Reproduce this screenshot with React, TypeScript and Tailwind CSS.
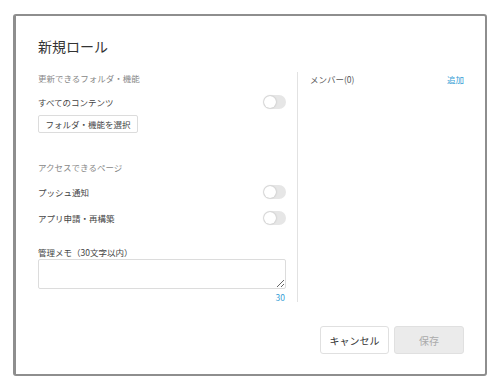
import React from "react";

const font = { fontFamily: '"Noto Sans CJK JP", "Noto Sans", sans-serif' };

function Toggle() {
  return (
    <div className="relative h-[14px] w-[23px] rounded-full bg-[#e6e6e6]">
      <div className="absolute left-[1px] top-[1px] h-[12px] w-[12px] rounded-full bg-white shadow-[0_0_2px_rgba(0,0,0,0.25)]" />
    </div>
  );
}

export default function App() {
  return (
    <div className="min-h-[390px] w-[497px] bg-white" style={font}>
      <div className="ml-[13px] pt-[14px]">
        <div className="flex h-[362px] w-[474px] flex-col rounded-[3px] border-b-2 border-l-[3px] border-r-2 border-t-2 border-[#8e8e8e] bg-white pl-[22px] pr-[21px]">
          <div className="mt-[20px] h-[20px] text-[14px] leading-[20px] text-[#333]">新規ロール</div>
          <div className="mt-[16px] flex">
            <div className="flex w-[248px] flex-col">
              <div className="flex h-[12px] items-center text-[8.5px] text-[#888]">更新できるフォルダ・機能</div>
              <div className="mt-[11px] flex h-[14px] items-center justify-between text-[8.5px] text-[#444]">
                <span>すべてのコンテンツ</span>
                <Toggle />
              </div>
              <div className="mt-[6px] flex">
                <button className="flex h-[18px] w-[100px] items-center justify-center rounded-[2px] border border-[#dcdcdc] bg-white text-[8.5px] text-[#444]">
                  フォルダ・機能を選択
                </button>
              </div>
              <div className="mt-[28px] flex h-[12px] items-center text-[8.5px] text-[#888]">アクセスできるページ</div>
              <div className="mt-[12px] flex h-[14px] items-center justify-between text-[8.5px] text-[#444]">
                <span>プッシュ通知</span>
                <Toggle />
              </div>
              <div className="mt-[12px] flex h-[14px] items-center justify-between text-[8.5px] text-[#444]">
                <span>アプリ申請・再構築</span>
                <Toggle />
              </div>
              <div className="mt-[21px] flex h-[12px] items-center text-[8.5px] text-[#444]">管理メモ（30文字以内）</div>
              <textarea className="mt-[1px] block h-[30px] w-[248px] rounded-[2px] border border-[#dcdcdc] bg-white outline-none" />
              <div className="mt-[3px] flex h-[10px] items-center justify-end pr-[1px] text-[8.5px] text-[#3a9fd6]">30</div>
            </div>
            <div className="ml-[11px] flex flex-1 border-l border-[#e2e2e2] pl-[12px]">
              <div className="flex h-[14px] w-full items-center justify-between text-[8.5px]">
                <span className="text-[#555]">メンバー(0)</span>
                <span className="text-[#3a9fd6]">追加</span>
              </div>
            </div>
          </div>
          <div className="mt-[24px] flex justify-end gap-[5px]">
            <button className="flex h-[28px] w-[69px] items-center justify-center rounded-[3px] border border-[#e0e0e0] bg-white text-[10px] text-[#333]">
              キャンセル
            </button>
            <button className="flex h-[28px] w-[70px] items-center justify-center rounded-[3px] border border-[#e0e0e0] bg-[#ebebeb] text-[10px] text-[#aaa]">
              保存
            </button>
          </div>
        </div>
      </div>
    </div>
  );
}
